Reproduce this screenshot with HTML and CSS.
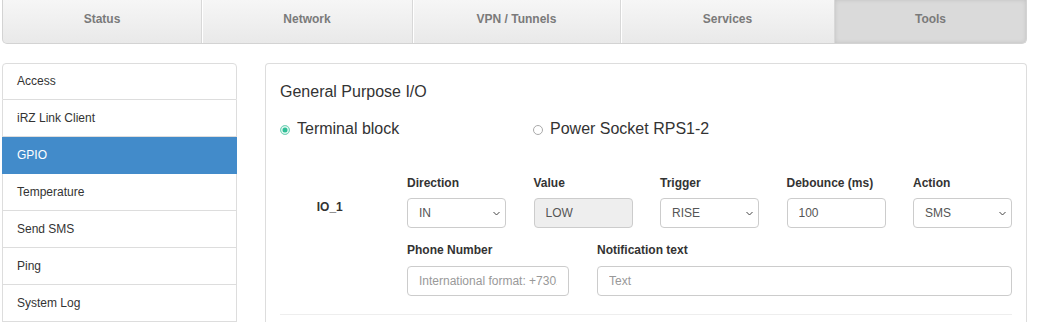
FILE: index.html
```html
<!DOCTYPE html>
<html lang="en">
<head>
  <meta charset="UTF-8">
  <title>Tools - GPIO</title>
  <link rel="stylesheet" href="styles.css">
</head>
<body>
  <div class="page">
    <!-- Top menu -->
    <div class="topnav">
      <a class="tab">Status</a>
      <a class="tab">Network</a>
      <a class="tab">VPN / Tunnels</a>
      <a class="tab">Services</a>
      <a class="tab active">Tools</a>
    </div>

    <div class="content">
      <!-- Side menu -->
      <ul class="sidemenu">
        <li>Access</li>
        <li>iRZ Link Client</li>
        <li class="active">GPIO</li>
        <li>Temperature</li>
        <li>Send SMS</li>
        <li>Ping</li>
        <li>System Log</li>
      </ul>

      <!-- GPIO panel -->
      <div class="panel">
        <h2 class="panel-title">General Purpose I/O</h2>

        <div class="radios">
          <label class="radio"><input type="radio" name="mode" checked> Terminal block</label>
          <label class="radio"><input type="radio" name="mode"> Power Socket RPS1-2</label>
        </div>

        <div class="io">
          <div class="io-name">IO_1</div>
          <div class="field">
            <label>Direction</label>
            <div class="select">
              <select><option>IN</option><option>OUT</option></select>
              <svg class="chevron" width="7" height="5" viewBox="0 0 7 5"><path d="M0.5 1 L3.5 4 L6.5 1" fill="none" stroke="#444" stroke-width="1"/></svg>
            </div>
          </div>
          <div class="field">
            <label>Value</label>
            <input type="text" value="LOW" disabled>
          </div>
          <div class="field">
            <label>Trigger</label>
            <div class="select">
              <select><option>RISE</option><option>FALL</option></select>
              <svg class="chevron" width="7" height="5" viewBox="0 0 7 5"><path d="M0.5 1 L3.5 4 L6.5 1" fill="none" stroke="#444" stroke-width="1"/></svg>
            </div>
          </div>
          <div class="field">
            <label>Debounce (ms)</label>
            <input type="text" value="100">
          </div>
          <div class="field">
            <label>Action</label>
            <div class="select">
              <select><option>SMS</option><option>NONE</option></select>
              <svg class="chevron" width="7" height="5" viewBox="0 0 7 5"><path d="M0.5 1 L3.5 4 L6.5 1" fill="none" stroke="#444" stroke-width="1"/></svg>
            </div>
          </div>

          <div class="io-extra">
            <div class="field">
              <label>Phone Number</label>
              <input type="text" placeholder="International format: +73012345678">
            </div>
            <div class="field">
              <label>Notification text</label>
              <input type="text" placeholder="Text">
            </div>
          </div>
        </div>
      </div>
    </div>
  </div>
</body>
</html>
```

FILE: styles.css
```css
/* General Styles */
body {
  margin: 0;
  padding: 0 0 0 2px;
  font-family: 'Liberation Sans', Arial, sans-serif;
  font-size: 12px;
  color: #333;
  background: #fff;
  overflow: hidden;
}

.page {
  width: 1025px;
}

/* Top menu */
.topnav {
  display: grid;
  grid-template-columns: 199px 211px 208px 214px 1fr;
  height: 43px;
  border: 1px solid #d3d3d3;
  border-top: none;
  border-radius: 0 0 5px 5px;
  background: linear-gradient(#f6f6f6, #e9e9e9);
  overflow: hidden;
}

.tab {
  padding-top: 10px;
  line-height: 18px;
  text-align: center;
  font-weight: bold;
  font-size: 12px;
  color: #7a7a7a;
  border-right: 1px solid #d8d8d8;
  box-shadow: 1px 0 0 #fff;
}

.tab.active {
  border-right: none;
  background: #dadada;
  box-shadow: inset 0 0 4px rgba(0, 0, 0, 0.12);
}

/* Layout */
.content {
  display: flex;
  gap: 28px;
  margin-top: 19px;
}

/* Side menu */
.sidemenu {
  list-style: none;
  margin: 0;
  padding: 0;
  width: 235px;
  flex: none;
}

.sidemenu li {
  line-height: 36px;
  padding: 0 14px;
  border: 1px solid #ddd;
  border-top: none;
  color: #333;
}

.sidemenu li:first-child {
  line-height: 35px;
  border-top: 1px solid #ddd;
  border-radius: 4px 4px 0 0;
}

.sidemenu li.active {
  background: #428bca;
  border-color: #428bca;
  color: #fff;
}

/* Panel */
.panel {
  flex: 1;
  border: 1px solid #ddd;
  border-bottom: none;
  border-radius: 4px 4px 0 0;
  padding: 18px 14px 0;
}

.panel-title {
  margin: 0;
  font-size: 16px;
  line-height: 20px;
  font-weight: normal;
  color: #333;
}

.radios {
  display: flex;
  margin-top: 17px;
}

.radio {
  display: flex;
  align-items: center;
  gap: 7px;
  width: 253px;
  font-size: 16px;
  line-height: 20px;
  color: #333;
}

.radio input {
  appearance: none;
  margin: 1px 0 0;
  width: 10px;
  height: 10px;
  border: 1px solid #aaa;
  border-radius: 50%;
  background: #fff;
}

.radio input:checked {
  border-color: #7fd6bd;
  background: #2fbf97;
  box-shadow: inset 0 0 0 1.5px #e4f7f1;
}

/* IO row */
.io {
  display: grid;
  grid-template-columns: 99.5px repeat(5, 99px);
  column-gap: 27.5px;
  margin-top: 36px;
  padding-bottom: 18px;
  border-bottom: 1px solid #eee;
}

.io-name {
  grid-row: 1;
  padding-top: 25px;
  text-align: center;
  font-weight: bold;
  font-size: 12px;
}

.field label {
  display: block;
  font-weight: bold;
  line-height: 17px;
  margin-bottom: 6px;
}

.field select,
.field input {
  display: block;
  box-sizing: border-box;
  width: 100%;
  height: 30px;
  margin: 0;
  padding: 0 11px;
  border: 1px solid #ccc;
  border-radius: 4px;
  background: #fff;
  font-family: inherit;
  font-size: 12px;
  color: #555;
}

.select {
  position: relative;
}

.field select {
  appearance: none;
  padding-right: 20px;
}

.chevron {
  position: absolute;
  right: 6px;
  top: 13px;
  pointer-events: none;
}

.field input:disabled {
  background: #eee;
}

.field input::placeholder {
  color: #999;
}

.io-extra {
  grid-column: 2 / 7;
  display: grid;
  grid-template-columns: 162px 1fr;
  column-gap: 28px;
  margin-top: 14px;
}

.io-extra label {
  margin-bottom: 7px;
}
```
